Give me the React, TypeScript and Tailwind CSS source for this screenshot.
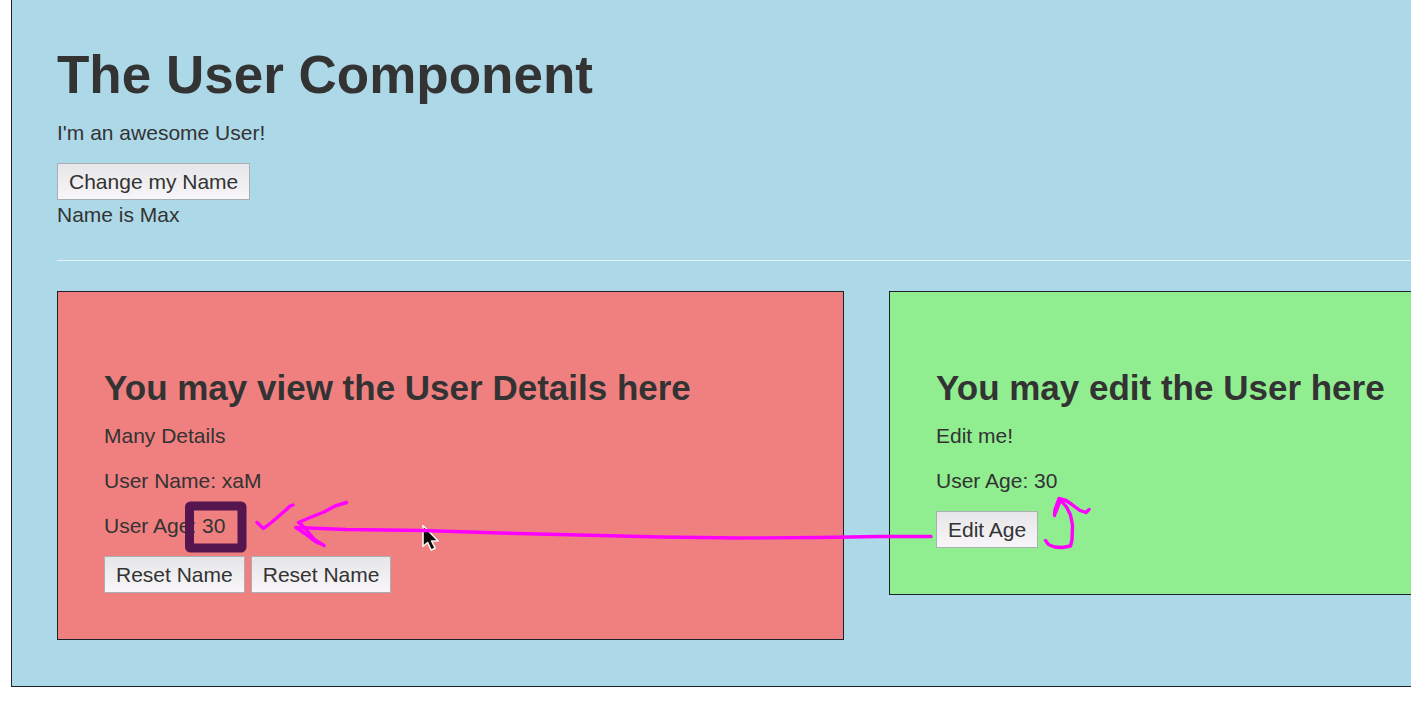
import type { ReactNode } from "react";

function ActionButton({ children }: { children: ReactNode }) {
  return (
    <button
      type="button"
      className="h-[37px] border border-[#a9b0b4] bg-linear-to-b from-[#e6e5e8] to-[#f8f6f8] px-[11px] text-[21px] leading-8 text-[#333]"
    >
      {children}
    </button>
  );
}

function Annotations() {
  return (
    <svg
      className="pointer-events-none absolute top-0 left-0"
      width="1411"
      height="705"
      viewBox="0 0 1411 705"
      fill="none"
      aria-hidden="true"
    >
      <rect x="189.5" y="506" width="52.5" height="42" rx="1" stroke="#55154f" strokeWidth="9" strokeLinejoin="round" />
      <path
        d="M423 525.500v21l4.600-4 3.600 7.500 4-1.800-3.600-7.200h6.600z"
        fill="#0b0b0b"
        stroke="#f5f5f5"
        strokeWidth="1.6"
        strokeLinejoin="round"
      />
      <g stroke="#ff00ff" strokeWidth="3.4" strokeLinecap="round" strokeLinejoin="round">
        <path d="M257 522.500l6.500 6L272 522l15-13 3-3 3-1" />
        <path d="M346.500 502.500L335 506L324 512L310 517.500L298.500 522.500L303 526L309 533L315 540L324 545.500" />
        <path d="M296 527.500L304 533L312 539L318 543" />
        <path d="M296 527.500L346 529.500L423 530.500L500 533L600 535.500L660 537L740 538L820 537.500L880 536.500L931 536.500" />
        <path d="M1045.500 540.500l3 4 6 2.500 8 .5 8-1.500 1.500-6 .5-15-2-10-4-8-6-7" />
        <path d="M1054.500 515.500l.500-6 4-11 7 2 6 4 8 6 6 2 3-3" />
        <path d="M1055.500 513l3-8 2-5" />
      </g>
    </svg>
  );
}

export default function App() {
  return (
    <div className="relative overflow-hidden bg-white pb-[18px] pl-[11px] font-['Liberation_Sans',Arial,sans-serif] text-[21px] leading-[30px] text-[#333]">
      <main className="border-b border-l border-[#1c222c] bg-[#add8e8] pt-[46px] pb-[46px] pl-[45px]">
        <h1 className="mb-[15px] text-[53px] leading-[57px] font-bold">The User Component</h1>
        <p className="mb-[15px]">I'm an awesome User!</p>
        <div className="flex flex-col items-start">
          <ActionButton>Change my Name</ActionButton>
          <p>Name is Max</p>
        </div>
        <hr className="my-[30px] border-[#e8f2f6]" />
        <div className="grid grid-cols-[787fr_522fr] items-start gap-[45px]">
          <section className="border border-[#1c222c] bg-[#f08080] px-[46px] pt-[76px] pb-[46px]">
            <h2 className="mb-[14px] text-[35px] leading-[39px] font-bold whitespace-nowrap">
              You may view the User Details here
            </h2>
            <p className="mb-[15px]">Many Details</p>
            <p className="mb-[15px]">User Name: xaM</p>
            <p className="mb-[15px]">User Age: 30</p>
            <div className="flex gap-[6px]">
              <ActionButton>Reset Name</ActionButton>
              <ActionButton>Reset Name</ActionButton>
            </div>
          </section>
          <section className="border-y border-l border-[#1c222c] bg-[#90ee90] pt-[76px] pb-[46px] pl-[46px]">
            <h2 className="mb-[14px] text-[35px] leading-[39px] font-bold whitespace-nowrap">
              You may edit the User here
            </h2>
            <p className="mb-[15px]">Edit me!</p>
            <p className="mb-[15px]">User Age: 30</p>
            <div className="flex">
              <ActionButton>Edit Age</ActionButton>
            </div>
          </section>
        </div>
      </main>
      <Annotations />
    </div>
  );
}
